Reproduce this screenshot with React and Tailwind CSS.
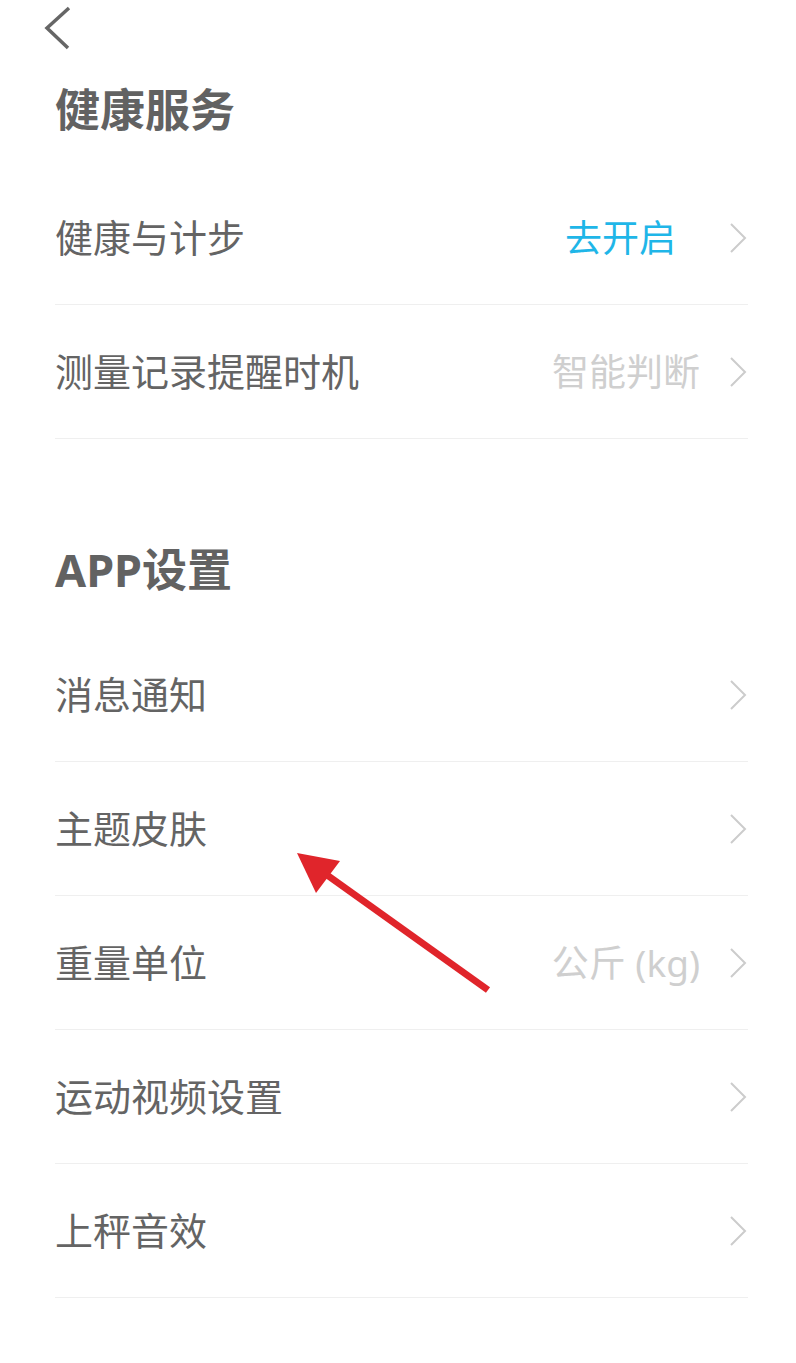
import React from 'react'

const font = { fontFamily: '"Noto Sans", "Noto Sans CJK SC", sans-serif' }

function Chevron() {
  return (
    <svg width="18" height="30" viewBox="0 0 18 30" fill="none" className="shrink-0">
      <path d="M1 1 L15 15 L1 29" stroke="#cccccc" strokeWidth="2" />
    </svg>
  )
}

function Row({ label, value, accent, extraGap }) {
  return (
    <div className="h-[134px] flex items-center border-b border-[#efefef]">
      <span className="text-[38px] text-[#646464] flex-1">{label}</span>
      {value && (
        <span
          className={
            'text-[37px] ' +
            (accent ? 'text-[#1fb6e8] mr-[54px]' : 'text-[#cfcfcf] mr-[30px]')
          }
        >
          {value}
        </span>
      )}
      <Chevron />
    </div>
  )
}

export default function App() {
  return (
    <div className="relative w-[796px] h-[1363px] bg-white overflow-hidden" style={font}>
      <div className="h-[58px] pl-[44px] pt-[6px]">
        <svg width="28" height="44" viewBox="0 0 28 44" fill="none">
          <path d="M25 2 L3 22 L24 42" stroke="#666666" strokeWidth="3.5" />
        </svg>
      </div>

      <div className="pl-[55px] pr-[48px]">
        <h2 className="text-[45px] leading-[60px] font-bold text-[#626262] pt-[22px] pb-[31px]">健康服务</h2>
        <Row label="健康与计步" value="去开启" accent />
        <Row label="测量记录提醒时机" value="智能判断" />

        <h2 className="text-[45px] leading-[60px] font-bold text-[#626262] pt-[101px] pb-[28px]">APP设置</h2>
        <Row label="消息通知" />
        <Row label="主题皮肤" />
        <Row label="重量单位" value="公斤 (kg)" />
        <Row label="运动视频设置" />
        <Row label="上秤音效" />
      </div>

      {/* red annotation arrow */}
      <svg className="absolute left-0 top-0 pointer-events-none" width="796" height="1363">
        <line x1="488" y1="990" x2="320" y2="870" stroke="#e0252b" strokeWidth="7" />
        <polygon points="297,853 340,861 316,893" fill="#e0252b" />
      </svg>
    </div>
  )
}
